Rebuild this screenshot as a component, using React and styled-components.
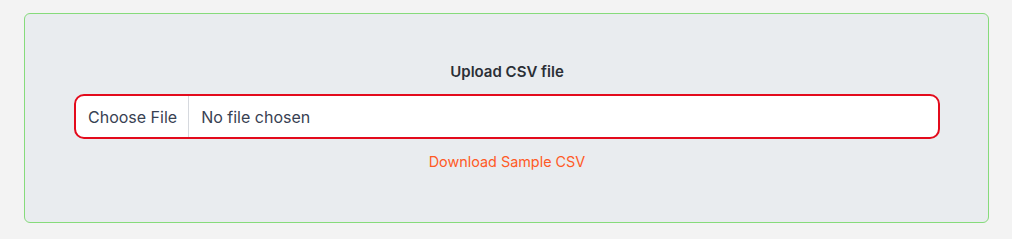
import React, { useState } from "react";
import styled, { createGlobalStyle } from "styled-components";

const GlobalStyle = createGlobalStyle`
  html, body {
    margin: 0;
    padding: 0;
    background: #f3f3f3;
    font-family: Inter, "Noto Sans", sans-serif;
  }
  * { box-sizing: border-box; }
`;

const Page = styled.div`
  padding: 13px 23px 13px 24px;
`;

const UploadCard = styled.div`
  background: #e9ecef;
  border: 1px solid #86db7b;
  border-radius: 6px;
  padding: 48px 48px 50px 49px;
  display: flex;
  flex-direction: column;
  align-items: center;
`;

const Title = styled.div`
  font-size: 15px;
  line-height: 20px;
  font-weight: 600;
  color: #2b2f36;
  margin-bottom: 12px;
`;

const FileField = styled.label`
  width: 100%;
  height: 45px;
  display: flex;
  align-items: stretch;
  background: #fff;
  border: 2px solid #e30b1c;
  border-radius: 10px;
  overflow: hidden;
  cursor: pointer;
  font-size: 16px;
  color: #384152;
`;

const HiddenInput = styled.input`
  display: none;
`;

const ChooseButton = styled.span`
  display: flex;
  align-items: center;
  padding: 0 11px 0 12px;
  border-right: 1px solid #d6d9de;
`;

const FileName = styled.span`
  display: flex;
  align-items: center;
  padding: 0 12px;
`;

const SampleLink = styled.a`
  margin-top: 13px;
  font-size: 14.4px;
  line-height: 20px;
  color: #ff5a26;
  text-decoration: none;
  cursor: pointer;
`;

export default function App() {
  const [fileName, setFileName] = useState("");

  const onChange = (e) => {
    const file = e.target.files && e.target.files[0];
    setFileName(file ? file.name : "");
  };

  return (
    <>
      <GlobalStyle />
      <Page>
        <UploadCard>
          <Title>Upload CSV file</Title>
          <FileField>
            <HiddenInput type="file" accept=".csv" onChange={onChange} />
            <ChooseButton>Choose File</ChooseButton>
            <FileName>{fileName || "No file chosen"}</FileName>
          </FileField>
          <SampleLink href="#">Download Sample CSV</SampleLink>
        </UploadCard>
      </Page>
    </>
  );
}
